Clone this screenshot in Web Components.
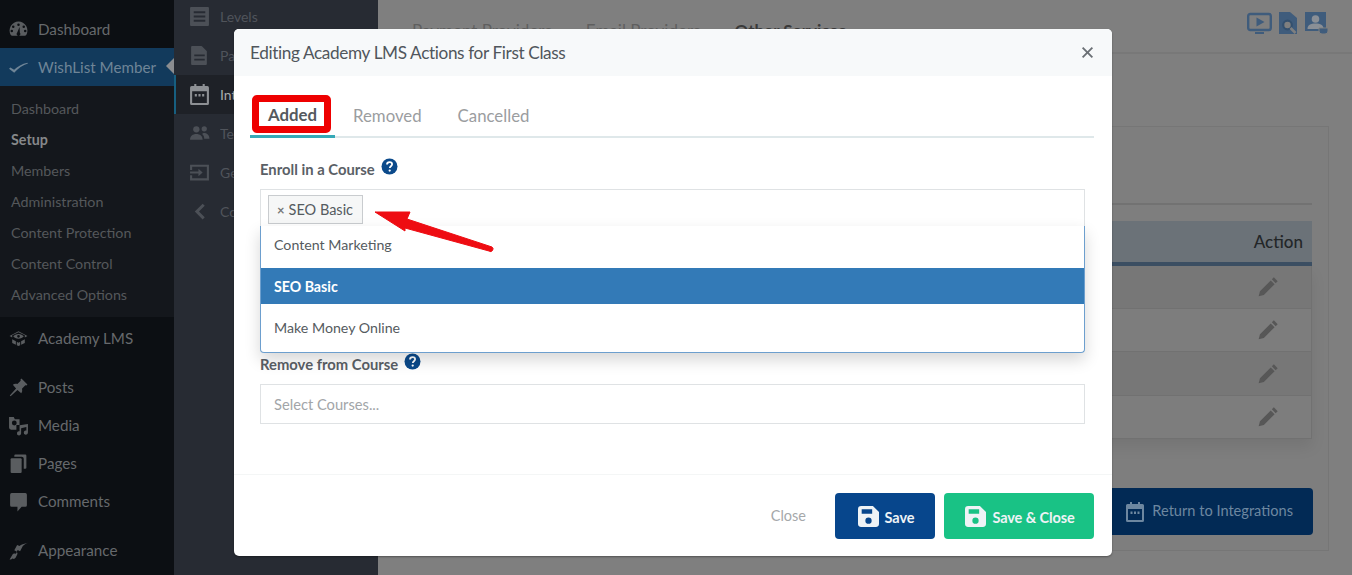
<!DOCTYPE html>
<html><head><meta charset="utf-8"><title>WishList Member</title>
<style>
html,body{margin:0;padding:0;height:575px;overflow:hidden;background:#808080;font-family:"Lato","Noto Sans",sans-serif}
</style></head><body>
<wl-app></wl-app>
<script>
const ICONS={
gauge:'<path fill-rule="evenodd" d="M10 2.500a8.500 8.500 0 0 0-7.400 12.700c.3.500.8.800 1.400.800h12c.6 0 1.100-.3 1.400-.8A8.500 8.500 0 0 0 10 2.500zM10 4.200a1.200 1.200 0 1 1 0 2.400 1.200 1.200 0 0 1 0-2.400zM5 6.200a1.200 1.200 0 1 1 0 2.400 1.200 1.200 0 0 1 0-2.400zM15 6.200a1.200 1.200 0 1 1 0 2.400 1.200 1.200 0 0 1 0-2.400zM3.600 10.300a1.200 1.200 0 1 1 0 2.400 1.200 1.200 0 0 1 0-2.400zM16.400 10.300a1.200 1.200 0 1 1 0 2.400 1.200 1.200 0 0 1 0-2.400zM11 7.500l.3 5.600a1.700 1.700 0 1 1-2.600 0z"/>',
check:'<path d="M1 13.200l1.200-1.300 3.600 2.300C9 10.800 13.400 8.400 18.600 7.400l.4.700c-5 1.600-9.400 4.600-13.100 9z" transform="translate(0 -2)"/>',
cap:'<path d="M10 3L1.500 7.500 4 9V6.900l6-2.900 6 2.900V9l2.500-1.500z"/><path d="M10 5.600c-2.200 0-4 .9-5 2.300 1 1.500 2.800 2.400 5 2.400s4-.9 5-2.400c-1-1.400-2.800-2.300-5-2.300zM10 6.600a1.300 1.300 0 1 1 0 2.600 1.300 1.300 0 0 1 0-2.600z"/><path d="M4 10.800l3.500 1.900v3.200L4 14.200zM8.400 13.200l1.600.8 1.600-.8v3.300l-1.600.7-1.600-.7zM12.500 12.700l3.500-1.900v3.400l-3.500 1.700z"/>',
pin:'<path d="M12.800 1.500l5.700 5.700-1 1-1-.3-3.200 3.200c.5 1.700.2 3.200-.7 4.300L9 12.300l-6.500 6-.8-.8 6-6.500L4.600 7.400c1.100-.9 2.600-1.200 4.300-.7l3.200-3.200-.3-1z"/>',
media:'<path fill-rule="evenodd" d="M1 2h4.500l1 2H11v5.500H8V14H3a2 2 0 0 1-2-2zM6 5.300a2.300 2.300 0 1 0 0 4.600 2.300 2.300 0 0 0 0-4.600z"/><path d="M19 8.500v8.200a2 2 0 1 1-1.500-1.900v-3.300l-5 1.200v4.700a2 2 0 1 1-1.500-1.900V9.800z"/>',
pages:'<path d="M7 1.500h9.500a1 1 0 0 1 1 1V14a1 1 0 0 1-1 1H15V5.500a2 2 0 0 0-2-2H6V2.500a1 1 0 0 1 1-1z"/><path d="M3.500 5h8.500a1 1 0 0 1 1 1v12a1 1 0 0 1-1 1H3.500a1 1 0 0 1-1-1V6a1 1 0 0 1 1-1z"/>',
comment:'<path d="M3.500 2h13A1.500 1.500 0 0 1 18 3.500v10a1.500 1.500 0 0 1-1.500 1.500H13l-4 4.500V15H3.500A1.500 1.500 0 0 1 2 13.500v-10A1.500 1.500 0 0 1 3.500 2z"/>',
brush:'<path d="M19.500 2.600c-1.600.2-4.300.9-6.200 1.600-1.100.4-1.900.9-2.300 1.600L8.700 4.700 6 9.800l2.500 1.300-1 2c-1.500-.4-2.600-.4-3 .4l-3 5c1.200.3 2.600-.4 3.600-1.400l-.3 1.100c1.200 0 2.100-.7 2.700-1.700l1.300-2.800c.5-.8.100-1.600-.6-2.200l1-1.900 2.300 1.200 2.600-5c.8-1.300 3-2.700 5.400-3.300z"/>',
list:'<path fill-rule="evenodd" d="M2 1h16a1 1 0 0 1 1 1v16a1 1 0 0 1-1 1H2a1 1 0 0 1-1-1V2a1 1 0 0 1 1-1zM4.500 5v2h11V5zM4.500 9v2h11V9zM4.500 13v2h11v-2z"/>',
doc:'<path fill-rule="evenodd" d="M3 1h9l5 5v12a1 1 0 0 1-1 1H3a1 1 0 0 1-1-1V2a1 1 0 0 1 1-1zM5 9v1.800h10V9zM5 13v1.800h10V13z"/><path d="M12 1v5h5z" fill-opacity=".5"/>',
cal:'<path fill-rule="evenodd" d="M5 0h2v2h6V0h2v2h2.500A1.500 1.500 0 0 1 19 3.500v15a1.500 1.500 0 0 1-1.500 1.500h-15A1.500 1.500 0 0 1 1 18.500v-15A1.500 1.500 0 0 1 2.500 2H5zM3 7v11h14V7zM5.500 9.500h2V12h-2zM9 9.500h2V12H9zM12.500 9.500h2V12h-2z"/>',
people:'<circle cx="7" cy="6" r="3"/><circle cx="14.500" cy="5.500" r="2.500"/><path d="M1 16c0-3.500 2.500-5.500 6-5.500s6 2 6 5.500zM14 9.500c3 0 5.500 1.800 5.500 5.500H14.500c0-2-.6-3.500-2-4.500.5-.6 1-1 1.500-1z"/>',
enter:'<path d="M1 2.500h18v15H1v-5h2v3h14v-11H3v3H1z"/><path d="M1 9h8V6.500l4 3.500-4 3.500V11H1z"/>',
chev:'<path d="M13 2.500L5.500 10l7.500 7.500 2-2L9.500 10 15 4.500z"/>',
pencil:'<path d="M15.300 1.200l3.500 3.500-1.800 1.800-3.500-3.500zM12.500 4l3.500 3.500-9.800 9.800-4.700 1.200 1.200-4.700z"/>',
save:'<path fill-rule="evenodd" d="M3 0h11.200L20 5.800V17a3 3 0 0 1-3 3H3a3 3 0 0 1-3-3V3a3 3 0 0 1 3-3zM3.500 3v4.500h10V3zM10 11a3 3 0 1 0 0 6 3 3 0 0 0 0-6z"/>',
close:'<path d="M3.500 1.500L10 8l6.500-6.500 2 2L12 10l6.500 6.500-2 2L10 12l-6.500 6.500-2-2L8 10 1.500 3.500z"/>'
};
const svg=(n,s,c)=>`<svg xmlns="http://www.w3.org/2000/svg" viewBox="0 0 20 20" width="${s}" height="${s}" fill="${c||'currentColor'}" aria-hidden="true">${ICONS[n]}</svg>`;
function def(name,css,html){
  customElements.define(name,class extends HTMLElement{
    constructor(){super();this.attachShadow({mode:'open'});}
    connectedCallback(){
      const h=typeof html==='function'?html(this):html;
      this.shadowRoot.innerHTML=`<style>${css}</style>${h}`;
    }
  });
}
def('wl-side-item',`:host{display:flex;align-items:center;height:38px;padding-left:8px;gap:9px;font-size:15.200px;color:#66696c}
:host([active]){background:#123a5c;color:#6f8597;position:relative}
:host([active])::after{content:"";position:absolute;right:0;top:10px;border:8px solid transparent;border-right-color:#8b8d90;border-left:0}
svg{flex:none;color:#5a5d60}
:host([active]) svg{color:#6f8597}
span{padding-bottom:1px}
:host([gap]){margin-top:11px}
:host([first]){margin-top:12px;height:37px}`,
el=>`${svg(el.getAttribute('icon'),21)}<span><slot></slot></span>`);
def('wl-side-sub',`:host{display:flex;align-items:center;height:31px;padding-left:11px;font-size:14.300px;color:#55585b}
:host([bold]){font-weight:700;color:#86888a}`,`<slot></slot>`);
def('wl-sidebar',`:host{display:block;width:174px;flex:none;background:#0c0f13;padding-top:10px;box-sizing:border-box;height:575px;overflow:hidden}
.sub{background:#14171c;padding:7px 0}
.tail{padding-top:2px}`,
`<wl-side-item icon="gauge">Dashboard</wl-side-item>
<wl-side-item icon="check" active>WishList Member</wl-side-item>
<div class="sub">
<wl-side-sub>Dashboard</wl-side-sub><wl-side-sub bold>Setup</wl-side-sub><wl-side-sub>Members</wl-side-sub><wl-side-sub>Administration</wl-side-sub><wl-side-sub>Content Protection</wl-side-sub><wl-side-sub>Content Control</wl-side-sub><wl-side-sub>Advanced Options</wl-side-sub>
</div>
<div class="tail">
<wl-side-item icon="cap">Academy LMS</wl-side-item>
<wl-side-item icon="pin" first>Posts</wl-side-item>
<wl-side-item icon="media">Media</wl-side-item>
<wl-side-item icon="pages">Pages</wl-side-item>
<wl-side-item icon="comment">Comments</wl-side-item>
<wl-side-item icon="brush" gap>Appearance</wl-side-item>
</div>`);
def('wl-sub-item',`:host{display:flex;align-items:center;height:39px;padding-left:15px;gap:10px;font-size:14px;color:#50545b}
:host([active]){background:#1e2127;color:#a9abad;box-shadow:inset 2px 0 0 #175f80}
svg{flex:none}
span{display:block;white-space:nowrap}
:host([clip]) span{max-width:14px;overflow:hidden}`,
el=>`${svg(el.getAttribute('icon'),21,el.hasAttribute('active')?'#8d9094':'#4c5057')}<span><slot></slot></span>`);
def('wl-submenu',`:host{display:block;width:204px;flex:none;background:#272b33;height:575px;overflow:hidden;box-sizing:border-box}
.wrap{margin-top:-3px}`,
`<div class="wrap"><wl-sub-item icon="list">Levels</wl-sub-item><wl-sub-item icon="doc" clip>Pa</wl-sub-item><wl-sub-item icon="cal" active clip>Integrations</wl-sub-item><wl-sub-item icon="people" clip>Team</wl-sub-item><wl-sub-item icon="enter" clip>Get</wl-sub-item><wl-sub-item icon="chev" clip>Collapse</wl-sub-item></div>`);
def('wl-content',`:host{display:flex;flex-direction:column;flex:1;min-width:0;height:575px;background:#7f7f7f;overflow:hidden;box-sizing:border-box}
.top{border-bottom:2px solid #787878;display:flex;align-items:flex-start;padding:21px 24px 0 34px;flex:none;height:31px}
.top span{font-size:17px;margin-right:34px;color:#5f5f5f;line-height:19px}
.top span.on{font-weight:700;color:#3a3a3a}
.icons{margin-left:auto;display:flex;margin-top:-10px;color:#3f5c7c}
.icons svg:nth-child(2){margin:0 8px 0 7px}
.card{margin:72px 23px 0 20px;height:425px;background:#7e7e7e;border:1px solid #767676;box-sizing:border-box;padding:0 16px;display:flex;flex-direction:column}
.hr{margin-top:76px;border-top:2px solid #727272;flex:none}
.thead{margin-top:16px;height:45px;box-sizing:border-box;background:#6b7278;border-bottom:4px solid #3c4f63;display:flex;align-items:center;justify-content:flex-end;padding-right:9px;font-size:17px;color:#232628;font-weight:500;flex:none}
.row{height:43px;border:1px solid #717171;border-top:0;box-sizing:border-box;display:flex;align-items:center;justify-content:flex-end;padding-right:32px;color:#575757;flex:none}
.row:nth-child(odd){background:#777}
.row:nth-child(even){background:#7d7d7d}
.tbl{box-shadow:0 8px 14px rgba(0,0,0,.08)}
.ret{margin-top:49px;align-self:flex-end;width:300px;height:47px;border-radius:4px;background:#022a55;color:#6d87a0;display:flex;align-items:center;justify-content:flex-end;gap:7px;padding-right:20px;box-sizing:border-box;font-size:14.600px;margin-right:-1px;flex:none}
.ret span{padding-bottom:2px}`,
`<div class="top"><span>Payment Providers</span><span>Email Providers</span><span class="on">Other Services</span>
<div class="icons">
<svg width="25" height="24" viewBox="0 0 25 24" fill="none"><rect x="1.200" y="3" width="22.600" height="16" rx="2" stroke="currentColor" stroke-width="2.400"/><path d="M9.500 6.500l8 4.500-8 4.500z" fill="currentColor"/><path d="M8 22h9" stroke="currentColor" stroke-width="2"/></svg>
<svg width="18" height="24" viewBox="0 0 18 24"><path fill="currentColor" d="M0 1h11l7 6v16H0z"/><circle cx="8.500" cy="14" r="4.300" fill="#7f7f7f" stroke="#34506e" stroke-width="2.200"/><path d="M11.500 17l5 5" stroke="#7f7f7f" stroke-width="2.600"/></svg>
<svg width="23" height="24" viewBox="0 0 23 24"><path fill="currentColor" d="M0 1h21v19H0z"/><circle cx="10.500" cy="8" r="3.800" fill="#8a8f96"/><path d="M2.500 18c0-4 3-5.500 8-5.500s8 1.500 8 5.500z" fill="#8a8f96"/><path d="M14 17h9v3a3 3 0 0 1-3 3h-3a3 3 0 0 1-3-3z" fill="currentColor" stroke="#7f7f7f"/></svg>
</div></div>
<div class="card"><div class="hr"></div>
<div class="thead">Action</div>
<div class="tbl"><div class="row">${svg('pencil',22)}</div><div class="row">${svg('pencil',22)}</div><div class="row" style="height:44px">${svg('pencil',22)}</div><div class="row">${svg('pencil',22)}</div></div>
<div class="ret">${svg('cal',20)}<span>Return to Integrations</span></div>
</div>`);
def('wl-tabs',`:host{display:flex;margin:0 18px 0 16px;height:62px;border-bottom:2px solid #dfe8ea;box-sizing:border-box;align-items:flex-end;font-size:16.800px;color:#9b9d9f;position:relative}
div{height:44px;display:flex;align-items:center;padding:0 18px 2px;margin-bottom:-2px;box-sizing:border-box}
.on{width:85px;justify-content:center;padding:0;color:#54595e;font-weight:700;border-bottom:3px solid #36a9b7}
.red{position:absolute;left:2px;top:19px;width:79px;height:38px;box-sizing:border-box;border:7px solid #ee0000;border-radius:5px}`,
`<div class="on">Added</div><div>Removed</div><div>Cancelled</div><span class="red"></span>`);
def('wl-label',`:host{display:flex;align-items:flex-start;gap:6px;font-size:14.800px;font-weight:700;color:#5a6066;line-height:18px}
svg{margin-top:-2px}`,
`<slot></slot><svg width="17" height="17" viewBox="0 0 17 17"><circle cx="8.500" cy="8.500" r="8" fill="#0b4a8b"/><path d="M6 6.500c0-1.500 1.100-2.400 2.600-2.400s2.500.9 2.500 2.200c0 1.900-2.300 1.900-2.300 3.600" fill="none" stroke="#fff" stroke-width="1.800"/><circle cx="8.700" cy="12.600" r="1.150" fill="#fff"/></svg>`);
def('wl-multiselect',`:host{display:block;position:relative;height:39px;border:1px solid #dfe2e4;box-sizing:border-box;background:#fff;font-size:14.200px;color:#555b60}
.tag{position:absolute;left:7px;top:5px;height:29px;width:95px;box-sizing:border-box;border:1px solid #c9cccf;background:#f6f7f7;display:flex;align-items:center;padding-left:8px;gap:4px;white-space:nowrap;font-size:14.500px}
.x{color:#777;font-size:13px;font-weight:700}
.drop{position:absolute;left:-1px;right:-1px;top:36px;height:127px;background:#fff;border:1px solid #6d9fce;border-top:0;border-radius:0 0 4px 4px;box-shadow:0 7px 16px rgba(0,0,0,.16);box-sizing:border-box;z-index:2;display:flex;flex-direction:column}
.o{display:flex;align-items:center;padding-left:13px}
.o.a{height:42px;padding-bottom:6px;box-sizing:border-box}.o.b{height:36px;background:#337ab7;color:#fff;font-weight:700}.o.c{height:47px}`,
`<div class="tag"><span class="x">×</span><span>SEO Basic</span></div>
<div class="drop"><div class="o a">Content Marketing</div><div class="o b">SEO Basic</div><div class="o c">Make Money Online</div></div>`);
def('wl-button',`:host{display:inline-flex;align-items:center;justify-content:center;height:46px;border-radius:4px;color:#eef3f6;font-size:14.500px;font-weight:700;letter-spacing:-.1px;gap:6px;box-sizing:border-box;flex:none;padding-left:2px}
:host([kind=save]){background:#07468c;width:100px}
:host([kind=green]){background:#19c285;width:150px}
span{position:relative;top:1px}`,
el=>`${svg('save',21)}<span><slot></slot></span>`);
def('wl-modal',`:host{display:flex;flex-direction:column;position:absolute;left:234px;top:29px;width:878px;height:527px;background:#fff;border-radius:5px;box-shadow:0 1px 2px rgba(0,0,0,.35);z-index:5}
header{height:47px;flex:none;background:#f7f9fa;border-radius:5px 5px 0 0;display:flex;align-items:center;justify-content:space-between;padding:0 18px 0 16px;font-size:17.200px;letter-spacing:-.37px;color:#50565c}
header svg{color:#6a6f74}
main{flex:1;min-height:0}
.f{margin:0 27px 0 26px}
.f1{padding-top:22px}.f1 wl-label{margin-bottom:11px}
.f2{margin-top:127px}.f2 wl-label{margin-bottom:11px}
.plain{display:flex;align-items:center;height:40px;border:1px solid #dfe2e4;box-sizing:border-box;padding-left:13px;font-size:14.700px;color:#a2a5a8}
footer{flex:none;height:82px;border-top:1px solid #f4f6f6;box-sizing:border-box;display:flex;align-items:flex-start;justify-content:flex-end;padding:18px 18px 0 0;gap:9px}
.cl{font-size:14.500px;color:#a5a8aa;margin-right:20px;align-self:flex-start;line-height:46px}
.arrow{position:absolute;left:130px;top:170px;pointer-events:none;z-index:6}`,
`<header><span>Editing Academy LMS Actions for First Class</span>${svg('close',13)}</header>
<main><wl-tabs></wl-tabs>
<div class="f f1"><wl-label>Enroll in a Course</wl-label><wl-multiselect></wl-multiselect></div>
<div class="f f2"><wl-label>Remove from Course</wl-label><div class="plain">Select Courses...</div></div>
</main>
<footer><span class="cl">Close</span><wl-button kind="save">Save</wl-button><wl-button kind="green">Save &amp; Close</wl-button></footer>
<svg class="arrow" width="140" height="60" viewBox="0 0 140 60"><path d="M11 13L46 13 43 20 128 48a2.300 2.300 0 0 1-3 4L41 29 41 32z" fill="#ee0c12" stroke="#ee0c12" stroke-linejoin="round"/></svg>`);
def('wl-app',`:host{display:flex;position:relative;width:1352px;height:575px;overflow:hidden}`,
`<wl-sidebar></wl-sidebar><wl-submenu></wl-submenu><wl-content></wl-content><wl-modal></wl-modal>`);
</script>
</body></html>
